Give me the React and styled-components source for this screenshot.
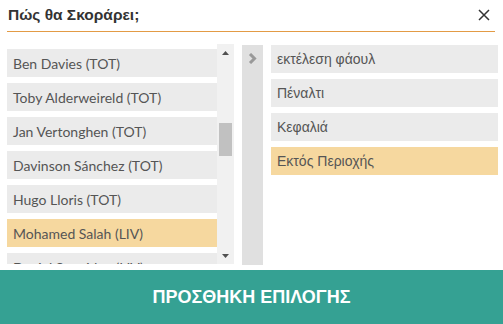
import React from "react";
import styled, { createGlobalStyle } from "styled-components";

const GlobalStyle = createGlobalStyle`
  html, body {
    margin: 0;
    padding: 0;
    background: #ffffff;
  }
  * {
    box-sizing: border-box;
  }
`;

export const Modal = styled.div`
  width: 503px;
  height: 324px;
  display: flex;
  flex-direction: column;
  background: #ffffff;
  overflow: hidden;
`;

export const Header = styled.div`
  display: flex;
  align-items: center;
  justify-content: space-between;
  height: 32px;
  margin: 0 8px 0 7px;
  padding: 0 5px 2px 1px;
  border-bottom: 1px solid #e39b45;
`;

export const Title = styled.h2`
  margin: 0;
  font-family: "Liberation Sans", Arial, sans-serif;
  font-size: 15.5px;
  font-weight: 700;
  color: #333333;
`;

export const Close = styled.button`
  border: 0;
  background: none;
  padding: 0;
  width: 12px;
  height: 12px;
  display: flex;
  cursor: pointer;
`;

export const Body = styled.div`
  display: flex;
  gap: 8px;
  height: 221px;
  margin: 12px 5px 0 7px;
`;

export const LeftColumn = styled.div`
  display: flex;
  width: 227px;
  height: 220px;
`;

export const Viewport = styled.div`
  flex: 1;
  overflow: hidden;
  padding-top: 5px;
  display: flex;
  flex-direction: column;
  gap: 6px;
`;

export const Row = styled.div`
  flex: none;
  height: 28px;
  display: flex;
  align-items: center;
  padding: 0 6px;
  background: ${(p) => (p.$selected ? "#f6d89f" : "#ebebeb")};
  color: #555555;
  font-family: ${(p) =>
    p.$lato ? `Lato, "Liberation Sans", sans-serif` : `"Liberation Sans", Arial, sans-serif`};
  font-size: 14px;
  white-space: nowrap;
`;

export const Scrollbar = styled.div`
  width: 17px;
  display: flex;
  flex-direction: column;
  background: #f1f1f1;
`;

export const ScrollArrow = styled.div`
  height: 17px;
  display: flex;
  align-items: center;
  justify-content: center;
`;

export const Track = styled.div`
  flex: 1;
  padding: ${(p) => p.$offset}px 2px 0;
`;

export const Thumb = styled.div`
  height: 33px;
  background: #c1c1c1;
`;

export const Mover = styled.div`
  width: 21px;
  margin-top: 1px;
  background: #e0e0e0;
  display: flex;
  justify-content: center;
  padding-top: 8px;
`;

export const RightList = styled.div`
  flex: 1;
  margin-top: 1px;
  display: flex;
  flex-direction: column;
  gap: 6px;
`;

export const AddButton = styled.button`
  margin-top: auto;
  height: 54px;
  border: 0;
  background: #35a193;
  color: #ffffff;
  font-family: "Liberation Sans", Arial, sans-serif;
  font-size: 18px;
  font-weight: 700;
  padding-top: 2px;
  cursor: pointer;
`;

const players = [
  "Ben Davies (TOT)",
  "Toby Alderweireld (TOT)",
  "Jan Vertonghen (TOT)",
  "Davinson Sánchez (TOT)",
  "Hugo Lloris (TOT)",
  "Mohamed Salah (LIV)",
  "Daniel Sturridge (LIV)",
];

const methods = ["εκτέλεση φάουλ", "Πέναλτι", "Κεφαλιά", "Εκτός Περιοχής"];

const App = () => {
  return (
    <Modal>
      <GlobalStyle />
      <Header>
        <Title>Πώς θα Σκοράρει;</Title>
        <Close aria-label="close">
          <svg width="12" height="12" viewBox="0 0 12 12">
            <path d="M1 1L11 11M11 1L1 11" stroke="#333" strokeWidth="1.5" />
          </svg>
        </Close>
      </Header>
      <Body>
        <LeftColumn>
          <Viewport>
            {players.map((name) => (
              <Row key={name} $lato $selected={name === "Mohamed Salah (LIV)"}>
                {name}
              </Row>
            ))}
          </Viewport>
          <Scrollbar>
            <ScrollArrow>
              <svg width="7" height="4" viewBox="0 0 7 4">
                <path d="M0 4L3.5 0L7 4Z" fill="#505050" />
              </svg>
            </ScrollArrow>
            <Track $offset={62}>
              <Thumb />
            </Track>
            <ScrollArrow>
              <svg width="7" height="4" viewBox="0 0 7 4">
                <path d="M0 0L3.5 4L7 0Z" fill="#505050" />
              </svg>
            </ScrollArrow>
          </Scrollbar>
        </LeftColumn>
        <Mover>
          <svg width="9" height="11" viewBox="0 0 9 11">
            <path d="M2 1L6.5 5.5L2 10" stroke="#999" strokeWidth="3" fill="none" />
          </svg>
        </Mover>
        <RightList>
          {methods.map((m) => (
            <Row key={m} $selected={m === "Εκτός Περιοχής"}>
              {m}
            </Row>
          ))}
        </RightList>
      </Body>
      <AddButton>ΠΡΟΣΘΗΚΗ ΕΠΙΛΟΓΗΣ</AddButton>
    </Modal>
  );
};

export default App;
